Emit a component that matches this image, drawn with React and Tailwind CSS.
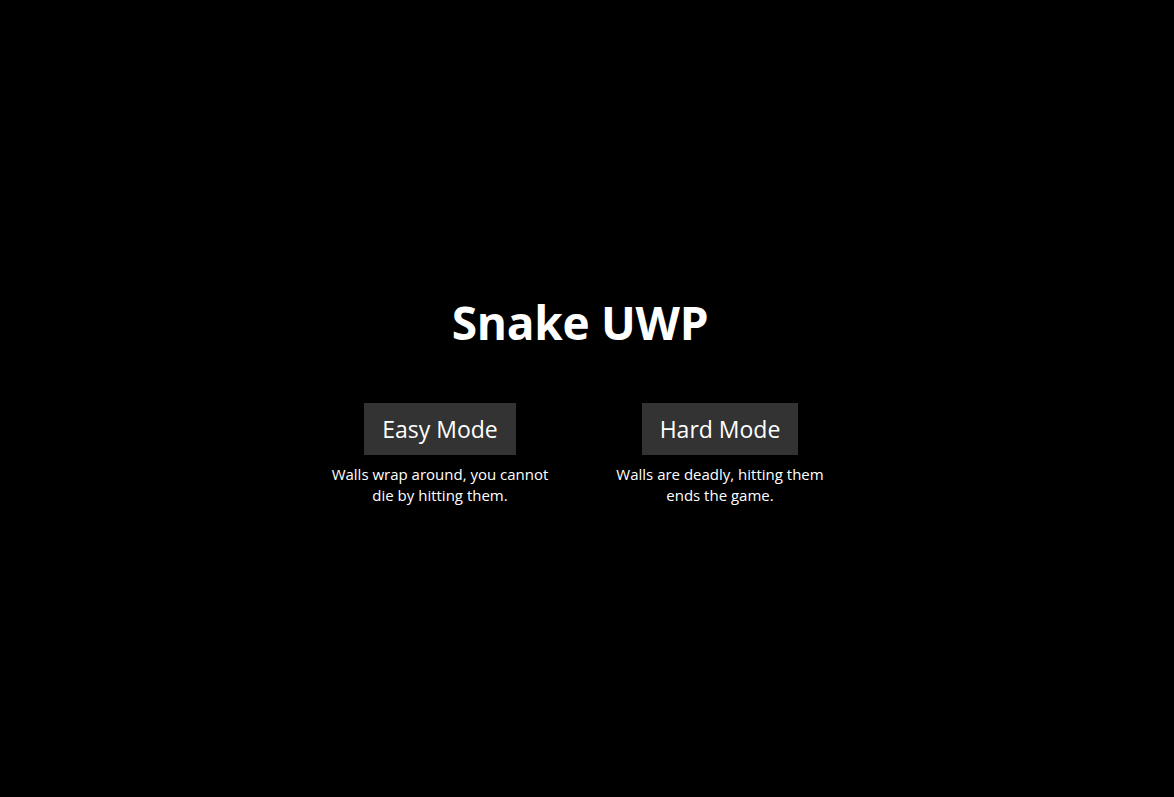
export default function App() {
  return (
    <div
      className="w-full h-[797px] bg-black text-white flex flex-col items-center justify-center pr-[14px]"
      style={{ fontFamily: '"Open Sans", "Noto Sans", sans-serif' }}
    >
      <h1 className="text-[46px] font-bold leading-[60px] tracking-[-0.3px]">Snake UWP</h1>
      <div className="mt-[51px] flex gap-[60px]">
        <div className="w-[220px] flex flex-col items-center">
          <button className="h-[52px] px-[18px] bg-[#333333] text-[23px] leading-[30px] text-white">
            Easy Mode
          </button>
          <p className="mt-[9px] text-[15px] leading-[21px] text-center">
            Walls wrap around, you cannot die by hitting them.
          </p>
        </div>
        <div className="w-[220px] flex flex-col items-center">
          <button className="h-[52px] px-[18px] bg-[#333333] text-[23px] leading-[30px] text-white">
            Hard Mode
          </button>
          <p className="mt-[9px] text-[15px] leading-[21px] text-center">
            Walls are deadly, hitting them ends the game.
          </p>
        </div>
      </div>
    </div>
  );
}
